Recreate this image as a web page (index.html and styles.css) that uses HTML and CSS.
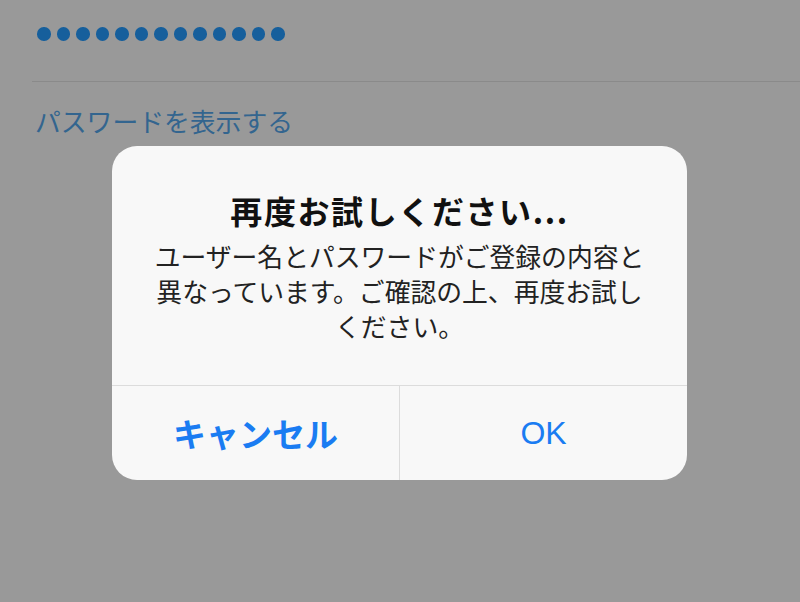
FILE: index.html
```html
<!DOCTYPE html>
<html lang="ja">
<head>
<meta charset="utf-8">
<title>再度お試しください</title>
<link rel="stylesheet" href="styles.css">
</head>
<body>
<div class="screen">
  <div class="field">
    <div class="dots">
      <span class="dot"></span><span class="dot"></span><span class="dot"></span><span class="dot"></span><span class="dot"></span><span class="dot"></span><span class="dot"></span><span class="dot"></span><span class="dot"></span><span class="dot"></span><span class="dot"></span><span class="dot"></span><span class="dot"></span>
    </div>
  </div>
  <div class="rule"></div>
  <div class="show-link">パスワードを表示する</div>

  <div class="alert" role="alertdialog">
    <div class="alert-body">
      <div class="alert-title">再度お試しください...</div>
      <div class="alert-message">ユーザー名とパスワードがご登録の内容と<br>異なっています。ご確認の上、再度お試し<br>ください。</div>
    </div>
    <div class="alert-actions">
      <div class="btn btn-cancel">キャンセル</div>
      <div class="btn btn-ok">OK</div>
    </div>
  </div>
</div>
</body>
</html>
```

FILE: styles.css
```css
html, body {
  margin: 0;
  padding: 0;
}

body {
  width: 800px;
  height: 602px;
  overflow: hidden;
  background: #999999;
  font-family: "Noto Sans CJK JP", "Noto Sans", sans-serif;
}

.screen {
  position: relative;
  width: 800px;
  height: 602px;
}

.field {
  padding: 27px 0 0 37px;
}

.dots {
  display: flex;
  gap: 6px;
}

.dot {
  width: 13.5px;
  height: 13.5px;
  border-radius: 50%;
  background: #165f9c;
}

.rule {
  margin: 40px 0 0 32px;
  border-top: 1px solid #8a8a8a;
}

.show-link {
  margin: 21px 0 0 35px;
  font-size: 25.8px;
  line-height: 36px;
  color: #33658f;
}

.alert {
  position: absolute;
  left: 112px;
  top: 146px;
  width: 575px;
  height: 334px;
  border-radius: 25px;
  background: #f8f8f8;
  overflow: hidden;
  display: flex;
  flex-direction: column;
}

.alert-body {
  height: 239px;
  box-sizing: border-box;
  padding-top: 44px;
  text-align: center;
}

.alert-title {
  font-size: 32px;
  font-weight: 700;
  line-height: 40px;
  letter-spacing: 1.6px;
  color: #111111;
}

.alert-message {
  margin-top: 8px;
  font-size: 25.8px;
  line-height: 35px;
  color: #222222;
}

.alert-actions {
  flex: 1;
  display: grid;
  grid-template-columns: 288px 1fr;
  border-top: 1px solid #dcdcdc;
}

.btn {
  display: flex;
  align-items: center;
  justify-content: center;
  color: #1a7cf2;
}

.btn-cancel {
  border-right: 1px solid #dcdcdc;
  font-size: 33px;
  font-weight: 700;
}

.btn-ok {
  font-family: "Liberation Sans", "Noto Sans", sans-serif;
  font-size: 32px;
}
```
